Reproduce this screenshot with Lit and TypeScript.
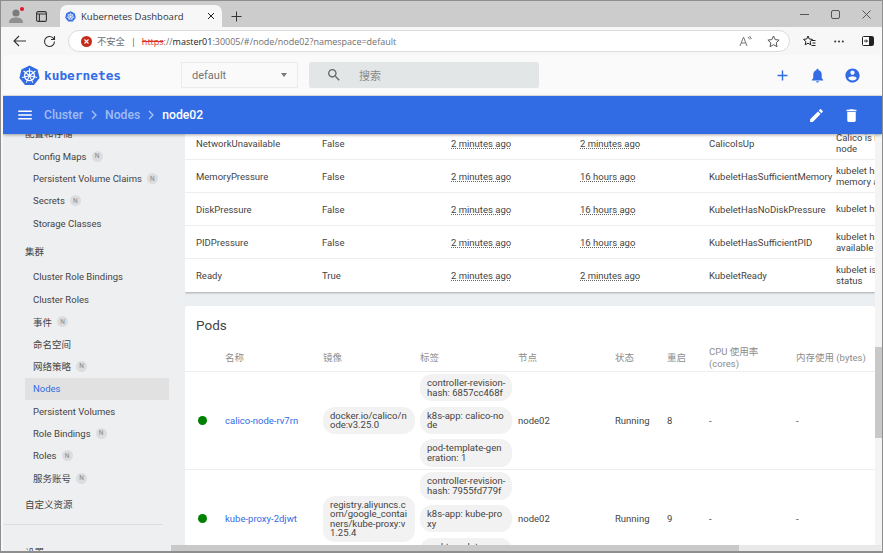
import { LitElement, html, css, svg } from "lit";
import { customElement } from "lit/decorators.js";

const ic = (d: string, size: number, cls = "") =>
  html`<svg class=${cls} width=${size} height=${size} viewBox="0 0 24 24" fill="currentColor"><path d=${d}></path></svg>`;
const P = {
  menu: "M3 18h18v-2H3v2zm0-5h18v-2H3v2zm0-7v2h18V6H3z",
  add: "M19 13h-6v6h-2v-6H5v-2h6V5h2v6h6v2z",
  bell: "M12 22c1.1 0 2-.9 2-2h-4c0 1.1.89 2 2 2zm6-6v-5c0-3.07-1.64-5.64-4.5-6.32V4c0-.83-.67-1.5-1.5-1.5s-1.5.67-1.5 1.5v.68C7.63 5.36 6 7.92 6 11v5l-2 2v1h16v-1l-2-2z",
  acct: "M12 2C6.48 2 2 6.48 2 12s4.48 10 10 10 10-4.48 10-10S17.52 2 12 2zm0 3c1.66 0 3 1.34 3 3s-1.34 3-3 3-3-1.34-3-3 1.34-3 3-3zm0 14.2c-2.5 0-4.71-1.28-6-3.22.03-1.99 4-3.08 6-3.08 1.99 0 5.97 1.09 6 3.08-1.29 1.94-3.5 3.22-6 3.22z",
  edit: "M3 17.25V21h3.75L17.81 9.94l-3.75-3.75L3 17.25zM20.71 7.04c.39-.39.39-1.02 0-1.41l-2.34-2.34c-.39-.39-1.02-.39-1.41 0l-1.83 1.83 3.75 3.75 1.83-1.83z",
  del: "M6 19c0 1.1.9 2 2 2h8c1.1 0 2-.9 2-2V7H6v12zM19 4h-3.5l-1-1h-5l-1 1H5v2h14V4z",
  search: "M15.5 14h-.79l-.28-.27C15.41 12.59 16 11.11 16 9.5 16 5.91 13.09 3 9.5 3S3 5.91 3 9.5 5.91 16 9.5 16c1.61 0 3.09-.59 4.23-1.57l.27.28v.79l5 4.99L20.49 19l-4.99-5zm-6 0C7.01 14 5 11.99 5 9.5S7.01 5 9.5 5 14 7.01 14 9.5 11.99 14 9.5 14z",
};

const k8s = (size: number) => html`<svg width=${size} height=${size} viewBox="0 0 24 24">
  <path fill="#326ce5" d="M12 .6 21.2 5l2.3 9.9-6.4 8H6.9L.5 14.9 2.8 5z"></path>
  <g fill="none" stroke="#fff">
    <circle cx="12" cy="12.3" r="5.6" stroke-width="1.5"></circle>
    ${[0, 51.4, 102.9, 154.3, 205.7, 257.1, 308.6].map(
      (a) => svg`<line x1="12" y1="12.3" x2="12" y2="3.6" stroke-width="1.2" transform="rotate(${a} 12 12.3)"></line>`
    )}
  </g>
  <circle cx="12" cy="12.3" r="1.5" fill="#fff"></circle>
</svg>`;

const sideItems: [string, boolean][] = [
  ["Config Maps", true], ["Persistent Volume Claims", true], ["Secrets", true], ["Storage Classes", false],
];
const clusterItems: [string, boolean, boolean?][] = [
  ["Cluster Role Bindings", false], ["Cluster Roles", false], ["事件", true], ["命名空间", false], ["网络策略", true],
  ["Nodes", false, true], ["Persistent Volumes", false], ["Role Bindings", true], ["Roles", true], ["服务账号", true],
];
const conditions = [
  ["NetworkUnavailable", "False", "2 minutes ago", "2 minutes ago", "CalicoIsUp", ["Calico is running on this", "node"]],
  ["MemoryPressure", "False", "2 minutes ago", "16 hours ago", "KubeletHasSufficientMemory", ["kubelet has sufficient", "memory available"]],
  ["DiskPressure", "False", "2 minutes ago", "16 hours ago", "KubeletHasNoDiskPressure", ["kubelet has no disk pressure"]],
  ["PIDPressure", "False", "2 minutes ago", "16 hours ago", "KubeletHasSufficientPID", ["kubelet has sufficient PID", "available"]],
  ["Ready", "True", "2 minutes ago", "2 minutes ago", "KubeletReady", ["kubelet is posting ready", "status"]],
] as const;
const pods = [
  {
    name: "calico-node-rv7rn", restarts: "8",
    image: ["docker.io/calico/n", "ode:v3.25.0"],
    labels: [["controller-revision-", "hash: 6857cc468f"], ["k8s-app: calico-no", "de"], ["pod-template-gen", "eration: 1"]],
  },
  {
    name: "kube-proxy-2djwt", restarts: "9",
    image: ["registry.aliyuncs.c", "om/google_contai", "ners/kube-proxy:v", "1.25.4"],
    labels: [["controller-revision-", "hash: 7955fd779f"], ["k8s-app: kube-pro", "xy"], ["pod-template-gen", "eration: 1"]],
  },
];
const lines = (l: readonly string[]) => l.map((t, i) => html`${i ? html`<br />` : ""}${t}`);

@customElement("app-root")
export class AppRoot extends LitElement {
  static styles = css`
    :host { display: block; width: 883px; height: 553px; overflow: hidden; font-family: Roboto, "Noto Sans CJK SC", sans-serif; }
    * { box-sizing: border-box; }
    .win { position: relative; width: 883px; height: 553px; display: flex; flex-direction: column; background: #f7f7f7; border: 1px solid #8e8e8e; border-bottom-width: 2px; overflow: hidden; }
    .tabs { height: 26px; flex: none; background: #cccccc; display: flex; align-items: flex-end; color: #333; }
    .tab-ic { width: 28px; height: 22px; display: flex; align-items: center; justify-content: center; flex: none; }
    .avatar { position: relative; width: 29px; }
    .layout { width: 22px; margin-right: 8px; }
    .dot-red { position: absolute; left: 19px; top: 2px; width: 4px; height: 4px; background: #e81123; border-radius: 50%; }
    .tab { width: 162px; height: 22px; background: #f7f7f7; border-radius: 7px 7px 0 0; display: flex; align-items: center; padding: 0 7px 0 4px; gap: 5px; font: 9.5px "Open Sans", "Noto Sans", sans-serif; color: #333; flex: none; }
    .fav { margin-left: 1px; display: flex; flex: none; }
    .tab .name { flex: 1; white-space: nowrap; }
    .close { color: #222; display: flex; }
    .spacer { flex: 1; }
    .wc { display: flex; align-items: center; height: 26px; color: #555; }
    .wc > div { width: 31px; display: flex; justify-content: center; }
    .toolbar { height: 28px; flex: none; display: flex; align-items: center; padding-left: 3px; color: #333; }
    .tb-ic { width: 30px; height: 24px; display: flex; align-items: center; justify-content: center; flex: none; }
    .url { width: 722px; height: 22px; margin-left: 4px; background: #fff; border: 1px solid #dcdcdc; border-radius: 11px; display: flex; align-items: center; padding-left: 12px; font: 9px "Open Sans", "Noto Sans CJK SC", sans-serif; color: #6f6f6f; white-space: nowrap; flex: none; }
    .err { width: 11px; height: 11px; border-radius: 50%; background: #c42b1c; color: #fff; display: flex; align-items: center; justify-content: center; margin-right: 5px; flex: none; }
    .unsafe { font-size: 9.3px; }
    .sep { margin: 0 6px 0 6px; color: #555; }
    .https { color: #d93025; text-decoration: line-through; }
    .host { color: #222; }
    .url .grow { flex: 1; }
    .url .u-ic { width: 28px; display: flex; justify-content: center; color: #666; flex: none; }
    .tb-right { display: flex; margin-left: 5px; }
    .tb-right > div { width: 29px; height: 24px; display: flex; justify-content: center; align-items: center; }
    .app { flex: 1; min-height: 0; display: flex; flex-direction: column; margin-left: 2px; border-radius: 5px 5px 0 0; overflow: hidden; background: #eceff1; }
    .head { height: 41px; flex: none; background: #fafafa; display: flex; align-items: center; border-bottom: 1px solid #e4e6e8; }
    .logo { display: flex; align-items: center; margin-left: 16px; width: 162px; color: #326ce5; gap: 4px; font: bold 12.8px "DejaVu Sans Mono", monospace; flex: none; }
    .select { width: 117px; height: 26px; border: 1px solid #ebebeb; background: #fafafa; display: flex; align-items: center; justify-content: space-between; padding: 0 10px; font-size: 11px; color: #757575; flex: none; }
    .caret { width: 0; height: 0; border: 3.5px solid transparent; border-top: 4px solid #777; border-bottom: 0; }
    .search { width: 230px; height: 26px; margin-left: 11px; background: #e3e6e7; border-radius: 2px; display: flex; align-items: center; padding-left: 17px; color: #666; font-size: 11px; flex: none; gap: 17px; }
    .search span { color: #8a8a8a; }
    .head-r { margin-left: auto; display: flex; color: #326ce5; margin-right: 21px; gap: 18px; }
    .bar { height: 38px; flex: none; background: #326ce5; display: flex; align-items: center; color: #fff; padding-left: 13px; box-shadow: 0 1px 3px rgba(0, 0, 0, 0.35); position: relative; z-index: 2; font-size: 12.2px; font-weight: 500; }
    .crumb { color: rgba(255, 255, 255, 0.55); }
    .chev { color: rgba(255, 255, 255, 0.6); margin: 0 2px; display: flex; }
    .bar-r { margin-left: auto; display: flex; margin-right: 22px; gap: 18px; }
    .menu { margin-right: 10px; display: flex; }
    .body { flex: 1; min-height: 0; display: flex; overflow: hidden; }
    .side { width: 182px; flex: none; background: #eeeff1; color: #444; font-size: 9.5px; overflow: hidden; }
    .sec { height: 22px; margin-left: 22px; display: flex; align-items: center; color: #444; }
    .sec.first { margin-top: -13px; height: 24px; }
    .item { height: 22.4px; margin-left: 22px; width: 144px; padding-left: 8px; display: flex; align-items: center; gap: 5px; }
    .item.active { background: #e1e1e1; color: #326ce5; }
    .sec.c { margin-top: 3px; height: 26px; margin-bottom: 2px; }
    .sec.d { margin-top: 2px; height: 26px; }
    .n { width: 11px; height: 11px; border-radius: 50%; background: #dcdddf; color: #8a8a8a; font-size: 6.5px; display: flex; align-items: center; justify-content: center; }
    .div { height: 1px; background: #dcdee0; width: 160px; margin-top: 7px; }
    .sec.e { margin-top: 16px; }
    .main { flex: 1; min-width: 0; padding-right: 6px; overflow: hidden; color: #444; font-size: 9.5px; }
    .card { width: 690px; background: #fff; box-shadow: 0 1px 2px rgba(0, 0, 0, 0.3); overflow: hidden; }
    .card.cond { margin-top: -7px; }
    .crow { display: grid; grid-template-columns: 137px 129px 129px 129px 127px 39px; height: 33px; align-items: center; border-bottom: 1px solid #eeeeee; }
    .crow:last-child { border-bottom: 1px solid #fff; }
    .crow > div:first-child { padding-left: 11px; }
    .crow .ts { text-decoration: underline dotted #666; text-underline-offset: 1px; }
    .crow .msg { white-space: nowrap; overflow: hidden; line-height: 11.5px; }
    .card.pods { margin-top: 13.5px; box-shadow: none; border-radius: 3px 3px 0 0; }
    .title { height: 39px; padding-left: 11px; font-size: 13.5px; color: #444; display: flex; align-items: center; }
    .pgrid { display: grid; grid-template-columns: 40px 98px 97px 98px 97px 52px 42px 87px 79px; align-items: center; }
    .phead { height: 27px; color: #8d8d8d; border-bottom: 1px solid #eeeeee; line-height: 12px; }
    .prow { height: 98.5px; border-bottom: 1px solid #eeeeee; }
    .dot { width: 9px; height: 9px; border-radius: 50%; background: #008000; margin-left: 13px; }
    .link { color: #326ce5; }
    .chips { display: flex; flex-direction: column; gap: 5.5px; width: 92px; }
    .chip { background: #f2f2f2; border-radius: 12px; padding: 4px 7px; line-height: 9.6px; white-space: nowrap; width: 92px; color: #444; }
    .vbar { position: absolute; right: 0; top: 346px; width: 7px; height: 91px; background: #c8c8c8; }
    .vtrack { position: absolute; right: 0; top: 134px; bottom: 0; width: 7px; background: #f4f4f4; }
    .hbar { position: absolute; left: 170px; bottom: 0; height: 6px; width: 710px; background: #e9e9e9; }
    .hbar div { width: 568px; height: 6px; background: #c9c9c9; }
  `;

  render() {
    const sideRow = ([t, n, a]: [string, boolean, boolean?]) =>
      html`<div class="item ${a ? "active" : ""}"><span>${t}</span>${n ? html`<span class="n">N</span>` : ""}</div>`;
    return html`<div class="win">
      <div class="tabs">
        <div class="tab-ic avatar">
          <svg width="14" height="16" viewBox="0 0 14 16"><circle cx="7" cy="5" r="3.6" fill="#7c7c7c"></circle><path d="M0 15c0-4 3-5.5 7-5.5s7 1.500 7 5.500z" fill="#8f8f8f"></path></svg>
          <i class="dot-red"></i>
        </div>
        <div class="tab-ic layout">
          <svg width="11" height="11" viewBox="0 0 11 11" fill="none" stroke="#333" stroke-width="1.1"><rect x=".6" y=".6" width="9.800" height="9.800" rx="1.500"></rect><path d="M.6 3h9.800M3.400 3v7.400"></path></svg>
        </div>
        <div class="tab">
          <span class="fav">${k8s(11)}</span>
          <span class="name">Kubernetes Dashboard</span>
          <div class="close"><svg width="8" height="8" viewBox="0 0 8 8" stroke="#222" stroke-width="1"><path d="M1 1l6 6M7 1L1 7"></path></svg></div>
        </div>
        <div class="tab-ic">
          <svg width="11" height="11" viewBox="0 0 11 11" stroke="#333" stroke-width="1"><path d="M5.500 .5v10M.5 5.500h10"></path></svg>
        </div>
        <div class="spacer"></div>
        <div class="wc">
          <div><svg width="9" height="9" viewBox="0 0 9 9" stroke="#555"><path d="M0 4.500h9"></path></svg></div>
          <div><svg width="9" height="9" viewBox="0 0 9 9" fill="none" stroke="#555"><rect x=".5" y=".5" width="8" height="8" rx="1.500"></rect></svg></div>
          <div><svg width="9" height="9" viewBox="0 0 9 9" stroke="#555"><path d="M.5 .5l8 8M8.500 .5l-8 8"></path></svg></div>
        </div>
      </div>
      <div class="toolbar">
        <div class="tb-ic"><svg width="13" height="12" viewBox="0 0 13 12" fill="none" stroke="#333" stroke-width="1.100"><path d="M13 6H1M6 1 1 6l5 5"></path></svg></div>
        <div class="tb-ic"><svg width="13" height="13" viewBox="0 0 13 13" fill="none" stroke="#333" stroke-width="1.100"><path d="M11.500 6.500a5 5 0 1 1-1.500-3.600L11.500 4.500M11.500 1v3.500H8"></path></svg></div>
        <div class="url">
          <div class="err"><svg width="5" height="5" viewBox="0 0 5 5" stroke="#fff" stroke-width="1.100"><path d="M.5 .5l4 4M4.500 .5l-4 4"></path></svg></div>
          <span class="unsafe">不安全</span><span class="sep">|</span>
          <span class="https">https</span><span>://</span><span class="host">master01</span><span>:30005/#/node/node02?namespace=default</span>
          <span class="grow"></span>
          <div class="u-ic"><svg width="13" height="12" viewBox="0 0 13 12" fill="none" stroke="#777"><path d="M1 11 4.500 2 8 11M2.200 8h4.600M9 2l2 2.500M10.500 1l2 3"></path></svg></div>
          <div class="u-ic"><svg width="13" height="13" viewBox="0 0 13 13" fill="none" stroke="#555"><path d="M6.500 1l1.700 3.600 3.900.5-2.900 2.700.8 3.900-3.500-2-3.500 2 .8-3.900L.9 5.100l3.900-.5z"></path></svg></div>
          <span style="width:2px"></span>
        </div>
        <div class="tb-right">
          <div><svg width="13" height="13" viewBox="0 0 13 13" fill="none" stroke="#222"><path d="M5 1l1.300 3 3.200.4-2.400 2.200.7 3.200L5 8.200 2.200 9.800l.7-3.200L.5 4.400 3.700 4zM9 5.500h3.500M9.500 8h3M8.500 10.500h4"></path></svg></div>
          <div><svg width="10" height="3" viewBox="0 0 10 3" fill="#333"><circle cx="1.200" cy="1.500" r="1"></circle><circle cx="5" cy="1.500" r="1"></circle><circle cx="8.800" cy="1.500" r="1"></circle></svg></div>
          <div><svg width="12" height="10" viewBox="0 0 12 10"><rect x=".5" y=".5" width="11" height="9" rx="1" fill="#fff" stroke="#222"></rect><rect x="7" y="1" width="4" height="8" fill="#222"></rect><path d="M2 5h3M4 3.500 5.500 5 4 6.500" stroke="#222" fill="none"></path></svg></div>
        </div>
      </div>
      <div class="app">
        <div class="head">
          <div class="logo">${k8s(21)}<span>kubernetes</span></div>
          <div class="select"><span>default</span><i class="caret"></i></div>
          <div class="search">${ic(P.search, 16)}<span>搜索</span></div>
          <div class="head-r">${ic(P.add, 17)}${ic(P.bell, 17)}${ic(P.acct, 17)}</div>
        </div>
        <div class="bar">
          <span class="menu">${ic(P.menu, 18)}</span>
          <span class="crumb">Cluster</span>
          <span class="chev"><svg width="18" height="12" viewBox="0 0 18 12" fill="none" stroke="currentColor" stroke-width="1.300"><path d="M7 2l4 4-4 4"></path></svg></span>
          <span class="crumb">Nodes</span>
          <span class="chev"><svg width="18" height="12" viewBox="0 0 18 12" fill="none" stroke="currentColor" stroke-width="1.300"><path d="M7 2l4 4-4 4"></path></svg></span>
          <span>node02</span>
          <div class="bar-r">${ic(P.edit, 17)}${ic(P.del, 17)}</div>
        </div>
        <div class="body">
          <div class="side">
            <div class="sec first">配置和存储</div>
            ${sideItems.map((i) => sideRow(i))}
            <div class="sec c">集群</div>
            ${clusterItems.map((i) => sideRow(i))}
            <div class="sec d">自定义资源</div>
            <div class="div"></div>
            <div class="sec e">设置</div>
          </div>
          <div class="main">
            <div class="card cond">
              ${conditions.map(
                (r) => html`<div class="crow">
                  <div>${r[0]}</div><div>${r[1]}</div>
                  <div><span class="ts">${r[2]}</span></div><div><span class="ts">${r[3]}</span></div>
                  <div>${r[4]}</div><div class="msg">${lines(r[5])}</div>
                </div>`
              )}
            </div>
            <div class="card pods">
              <div class="title">Pods</div>
              <div class="pgrid phead">
                <div></div><div>名称</div><div>镜像</div><div>标签</div><div>节点</div><div>状态</div><div>重启</div><div>CPU 使用率<br />(cores)</div><div>内存使用 (bytes)</div>
              </div>
              ${pods.map(
                (p) => html`<div class="pgrid prow">
                  <div><div class="dot"></div></div>
                  <div class="link">${p.name}</div>
                  <div><div class="chip">${lines(p.image)}</div></div>
                  <div class="chips">${p.labels.map((l) => html`<div class="chip">${lines(l)}</div>`)}</div>
                  <div>node02</div><div>Running</div><div>${p.restarts}</div><div>-</div><div>-</div>
                </div>`
              )}
            </div>
          </div>
        </div>
      </div>
      <div class="vtrack"></div>
      <div class="vbar"></div>
      <div class="hbar"><div></div></div>
    </div>`;
  }
}
